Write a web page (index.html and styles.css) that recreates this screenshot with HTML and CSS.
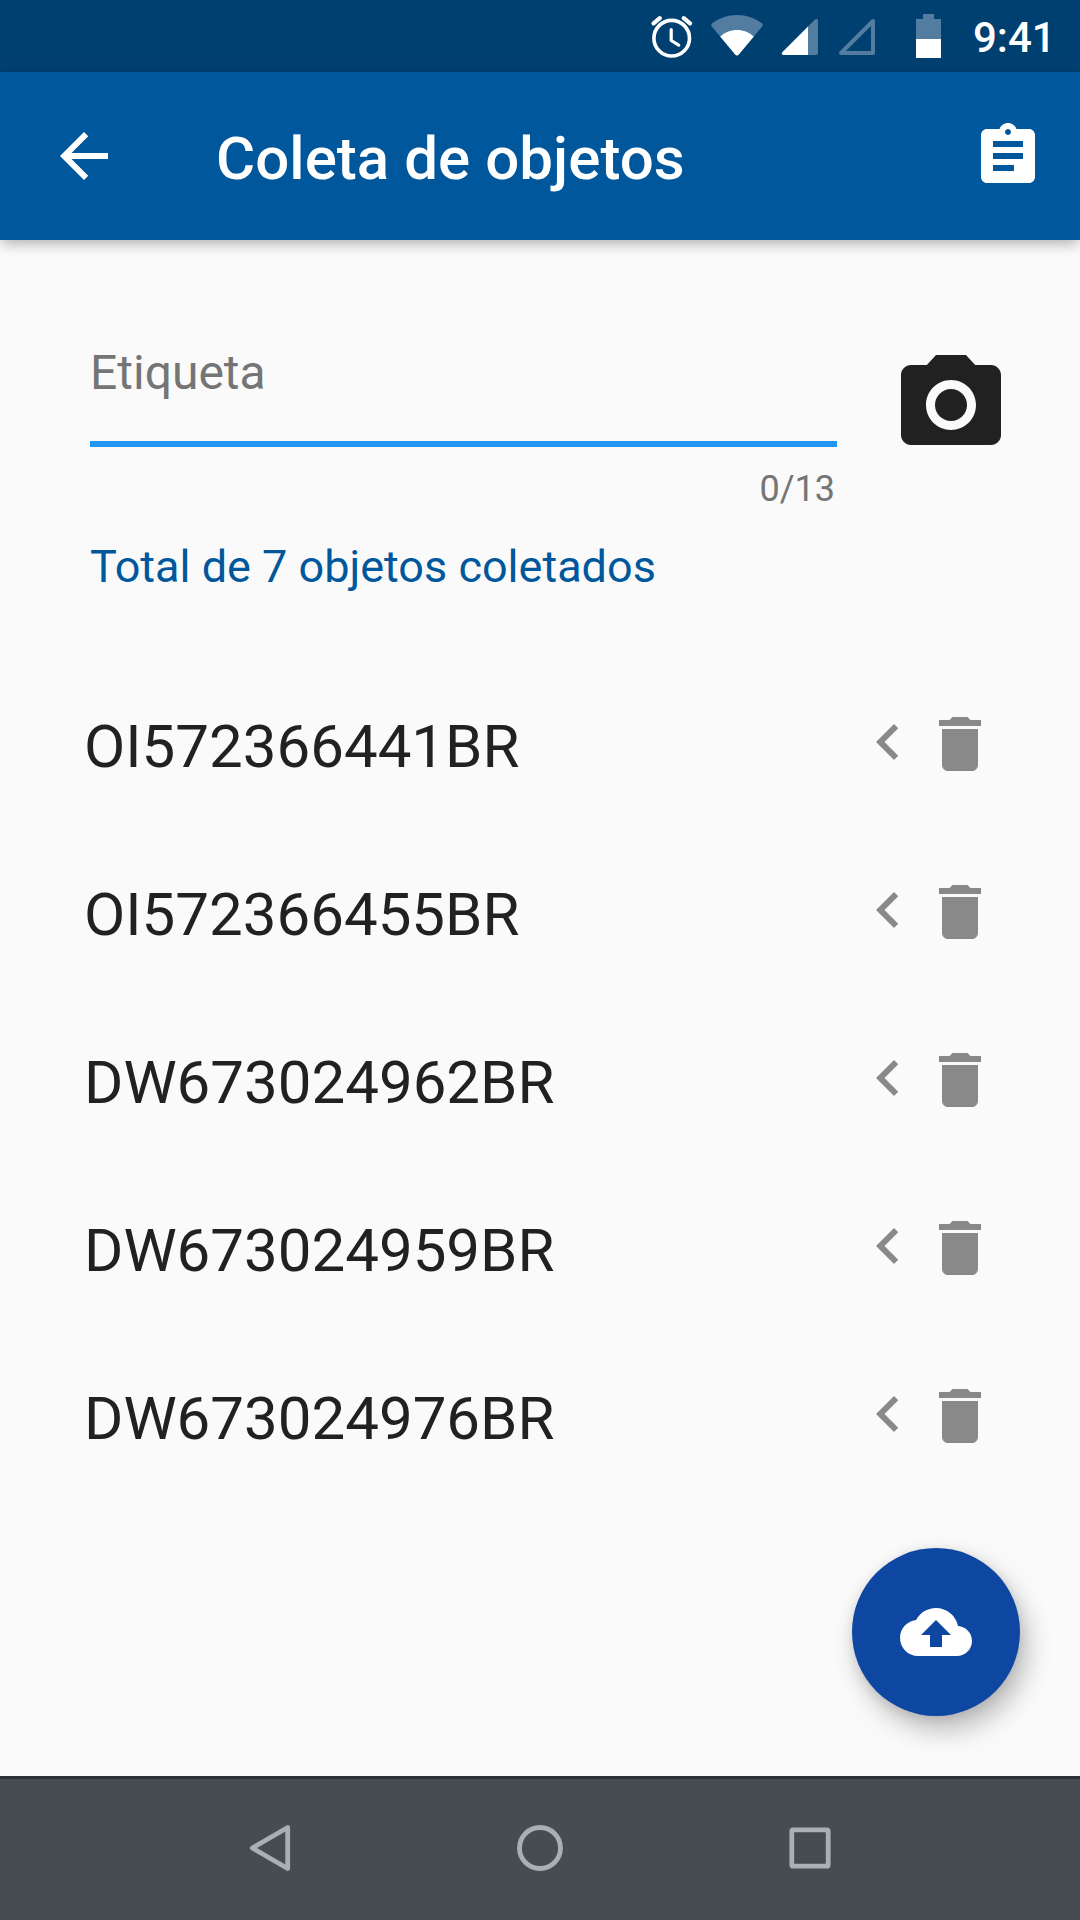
FILE: index.html
```html
<!DOCTYPE html>
<html lang="pt-BR">
<head>
<meta charset="utf-8">
<title>Coleta de objetos</title>
<link rel="stylesheet" href="styles.css">
</head>
<body>
<svg width="0" height="0" class="defs" aria-hidden="true">
  <symbol id="chevron" viewBox="0 0 24 24"><path d="M15.41 7.41L14 6l-6 6 6 6 1.41-1.41L10.83 12z"/></symbol>
  <symbol id="trash" viewBox="0 0 24 24"><path d="M6 19c0 1.1.9 2 2 2h8c1.1 0 2-.9 2-2V7H6v12zM19 4h-3.5l-1-1h-5l-1 1H5v2h14V4z"/></symbol>
</svg>
<div class="screen">
  <div class="status">
    <svg class="alarm" width="42" height="44" viewBox="0 0 42 44" fill="none" stroke="#fff" stroke-linecap="round" stroke-linejoin="round">
      <circle cx="20.7" cy="24.2" r="17.8" stroke-width="3.6"/>
      <path d="M20.2 15.5v11l7.5 4.6" stroke-width="3.2"/>
      <path d="M2.6 9.4l6.2-5.2M39 9.4l-6.2-5.2" stroke-width="4.2"/>
    </svg>
    <svg class="wifi" width="52" height="42" viewBox="0 0 52 42">
      <path d="M26 0C16.500 0 8 3.200 1.200 8.300Q-.5 9.800 .8 11.600L24.400 39.700Q26 41.200 27.600 39.700L51.200 11.600Q52.500 9.800 50.800 8.300C44 3.200 35.500 0 26 0z" fill="#527ca0"/>
      <path d="M9.200 21.600C13.500 17.500 19.500 15 26 15s12.500 2.500 16.800 6.600L27.600 39.700Q26 41.200 24.400 39.700z" fill="#fff"/>
    </svg>
    <svg class="signal" width="38" height="38" viewBox="0 0 38 38">
      <path d="M27 8.500L34 1.500Q37 -.5 37 3V34.500Q37 37 34.500 37H27z" fill="#527ca0"/>
      <path d="M27 8.500V37H2.500Q-.5 36.500 1.500 34z" fill="#fff"/>
    </svg>
    <svg class="signal signal-empty" width="38" height="38" viewBox="0 0 38 38">
      <path d="M35 3v32H3z" fill="none" stroke="#527ca0" stroke-width="4" stroke-linejoin="round"/>
    </svg>
    <svg class="battery" width="25" height="44" viewBox="0 0 25 44">
      <path d="M7 0h11v5h7v20H0V5h7z" fill="#527ca0"/><path d="M0 25h25v19H0z" fill="#fff"/>
    </svg>
    <span class="time">9:41</span>
  </div>

  <header class="appbar">
    <svg class="icon" viewBox="0 0 24 24"><path d="M20 11H7.830l5.590-5.590L12 4l-8 8 8 8 1.410-1.410L7.830 13H20v-2z"/></svg>
    <h1>Coleta de objetos</h1>
    <svg class="icon" viewBox="0 0 24 24"><path d="M19 3h-4.180C14.400 1.840 13.300 1 12 1c-1.300 0-2.400.84-2.820 2H5c-1.100 0-2 .9-2 2v14c0 1.100.9 2 2 2h14c1.100 0 2-.9 2-2V5c0-1.100-.9-2-2-2zm-7 0c.55 0 1 .45 1 1s-.45 1-1 1-1-.45-1-1 .45-1 1-1zm2 14H7v-2h7v2zm3-4H7v-2h10v2zm0-4H7V7h10v2z"/></svg>
  </header>

  <main class="content">
    <div class="entry">
      <div class="field">
        <div class="label">Etiqueta</div>
        <div class="counter">0/13</div>
      </div>
      <svg class="camera" viewBox="0 0 24 24"><circle cx="12" cy="12" r="3.200"/><path d="M9 2L7.170 4H4c-1.100 0-2 .9-2 2v12c0 1.100.9 2 2 2h16c1.100 0 2-.9 2-2V6c0-1.100-.9-2-2-2h-3.170L15 2H9zm3 15c-2.760 0-5-2.240-5-5s2.240-5 5-5 5 2.240 5 5-2.240 5-5 5z"/></svg>
    </div>
    <p class="total">Total de 7 objetos coletados</p>
    <ul class="list">
      <li><span>OI572366441BR</span><svg class="chevron"><use href="#chevron"/></svg><svg class="trash"><use href="#trash"/></svg></li>
      <li><span>OI572366455BR</span><svg class="chevron"><use href="#chevron"/></svg><svg class="trash"><use href="#trash"/></svg></li>
      <li><span>DW673024962BR</span><svg class="chevron"><use href="#chevron"/></svg><svg class="trash"><use href="#trash"/></svg></li>
      <li><span>DW673024959BR</span><svg class="chevron"><use href="#chevron"/></svg><svg class="trash"><use href="#trash"/></svg></li>
      <li><span>DW673024976BR</span><svg class="chevron"><use href="#chevron"/></svg><svg class="trash"><use href="#trash"/></svg></li>
    </ul>
    <button class="fab" aria-label="Enviar">
      <svg class="icon" viewBox="0 0 24 24"><path d="M19.350 10.040C18.670 6.590 15.640 4 12 4 9.110 4 6.600 5.640 5.350 8.040 2.340 8.360 0 10.910 0 14c0 3.310 2.690 6 6 6h13c2.760 0 5-2.240 5-5 0-2.640-2.050-4.780-4.650-4.960zM14 13v4h-4v-4H7l5-5 5 5h-3z"/></svg>
    </button>
  </main>

  <nav class="navbar">
    <svg viewBox="0 0 48 48"><path d="M41.700 3.500v41L6.300 24z"/></svg>
    <svg viewBox="0 0 48 48"><circle cx="24" cy="24" r="20.500"/></svg>
    <svg viewBox="0 0 48 48"><rect x="5.800" y="5.800" width="36.400" height="36.400" rx="1.500"/></svg>
  </nav>
</div>
</body>
</html>
```

FILE: styles.css
```css
* { box-sizing: border-box; }
body { margin: 0; font-family: Roboto, "Liberation Sans", sans-serif; background: #fafafa; }
svg { display: block; flex: none; }
.defs { position: absolute; }

.screen { width: 1080px; height: 1920px; display: flex; flex-direction: column; overflow: hidden; }

.status { flex: none; height: 72px; background: #004071; display: flex; align-items: flex-start; padding-left: 651px; }
.alarm { margin-top: 14px; }
.wifi { margin: 15px 0 0 18px; }
.signal { margin: 18px 0 0 18px; }
.signal-empty { margin-left: 19px; }
.battery { margin: 14px 0 0 40px; }
.time { margin-left: 32px; color: #fff; font-size: 42px; font-weight: 500; line-height: 48px; padding-top: 14px; }

.appbar {
  flex: none; height: 168px; padding: 0 36px 0 48px; background: #00579c; color: #fff;
  display: flex; align-items: center; position: relative;
  box-shadow: 0 6px 12px -3px rgba(0, 0, 0, .2), 0 3px 15px rgba(0, 0, 0, .14);
}
.icon { width: 72px; height: 72px; fill: #fff; }
.appbar h1 { flex: 1; margin: 0 0 0 96px; font-size: 60px; font-weight: 500; line-height: 70px; padding-top: 5px; letter-spacing: .05px; }

.content { flex: 1; position: relative; padding: 105px 75px 0 84px; }
.entry { display: flex; justify-content: space-between; }
.field { margin-left: 6px; width: 747px; }
.label { height: 102px; border-bottom: 6px solid #2196f3; font-size: 48px; line-height: 56px; color: #757575; }
.counter { margin-top: 21px; padding-right: 2px; font-size: 36px; line-height: 42px; color: #757575; text-align: right; }
.camera { width: 120px; height: 120px; fill: #212121; margin-right: -6px; }
.total { margin: 30px 0 0 6px; font-size: 45px; line-height: 53px; color: #00579c; }

.list { list-style: none; margin: 67px 0 0; padding: 0; }
.list li { height: 168px; display: flex; align-items: center; color: #212121; font-size: 60px; line-height: 70px; }
.list span { flex: 1; padding-top: 5px; }
.list svg { width: 72px; height: 72px; fill: #898989; }
.list .chevron { margin-top: -4px; }
.trash { margin-right: 9px; }

.fab {
  position: absolute; right: 60px; bottom: 60px; width: 168px; height: 168px; padding: 0;
  border: 0; border-radius: 50%; background: #0d47a1;
  display: flex; align-items: center; justify-content: center;
  box-shadow: 7px 14px 26px rgba(0, 0, 0, .25), 0 2px 12px rgba(0, 0, 0, .1);
}

.navbar {
  flex: none; height: 144px; background: #454d52; border-top: 3px solid #2a3034;
  display: flex; justify-content: center; gap: 222px; padding-top: 45px;
}
.navbar svg { width: 48px; height: 48px; fill: none; stroke: #abafb1; stroke-width: 4.8; stroke-linejoin: round; }
```
